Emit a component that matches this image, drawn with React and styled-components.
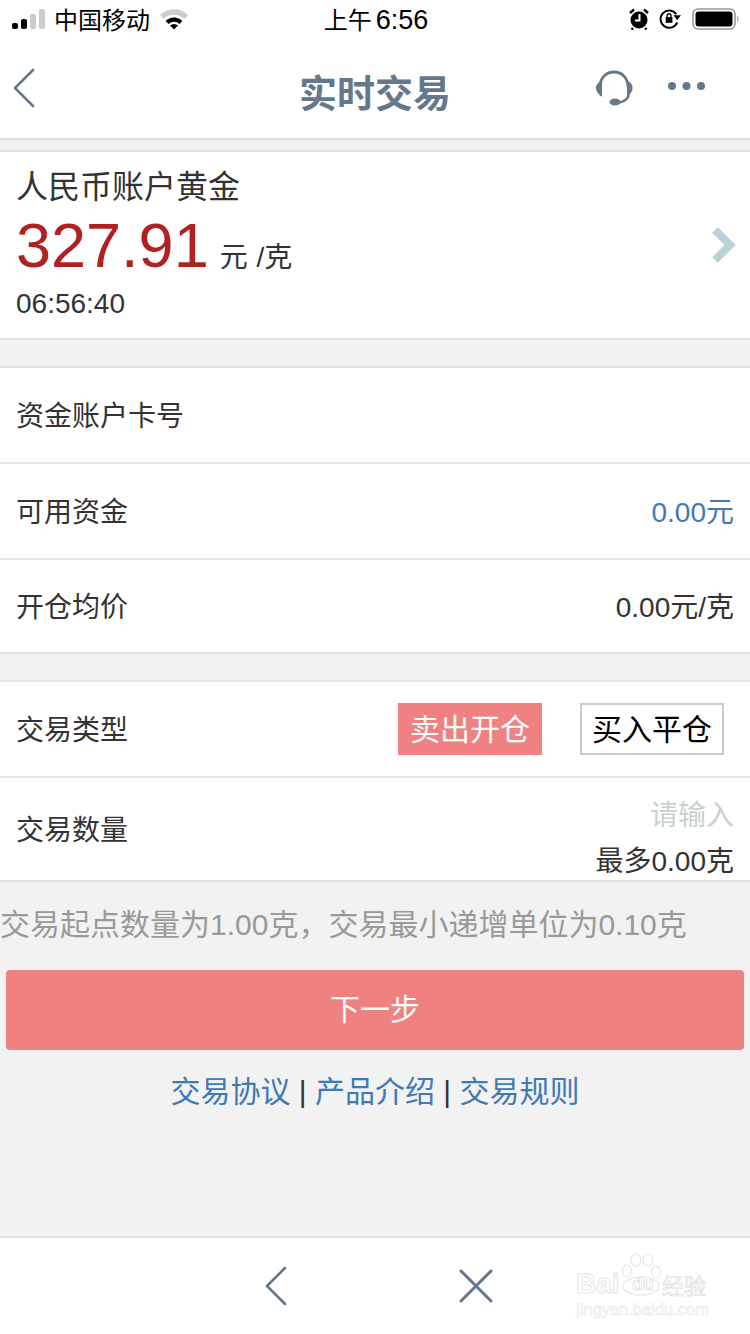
import React from 'react';
import styled, { createGlobalStyle } from 'styled-components';

const GlobalStyle = createGlobalStyle`
  html, body {
    margin: 0;
    padding: 0;
    background: #f2f2f2;
  }
  * {
    box-sizing: border-box;
  }
`

const Page = styled.div`
  width: 750px;
  height: 1334px;
  display: flex;
  flex-direction: column;
  background: #f2f2f2;
  font-family: "Liberation Sans", "Noto Sans CJK SC", sans-serif;
  color: #333;
  overflow: hidden;
`

const StatusBar = styled.div`
  height: 40px;
  padding: 0 10px 3px 12px;
  background: #fff;
  display: grid;
  grid-template-columns: 1fr auto 1fr;
  align-items: center;
  color: #000;
`

const StatusLeft = styled.div`
  display: flex;
  align-items: center;
  gap: 9px;
  font-size: 24px;
`

const StatusRight = styled.div`
  display: flex;
  align-items: center;
  justify-content: flex-end;
  gap: 10px;
`

const Clock = styled.div`
  font-size: 24px;
  display: flex;
  align-items: center;
  gap: 4px;
`

const ClockDigits = styled.span`
  font-size: 27px;
  margin-top: 3px;
`

const NavBar = styled.div`
  height: 100px;
  padding: 0 45px 2px 12px;
  background: #fff;
  border-bottom: 2px solid #d9e0e4;
  display: flex;
  align-items: center;
  justify-content: space-between;
  position: relative;
`

const NavTitle = styled.div`
  position: absolute;
  left: 0;
  right: 0;
  top: 23px;
  text-align: center;
  font-size: 38px;
  font-weight: bold;
  color: #64788a;
`

const NavActions = styled.div`
  display: flex;
  align-items: center;
  gap: 34px;
`

const DotsWrap = styled.div`
  display: flex;
  margin-top: -4px;
`

const Section = styled.div`
  margin-top: ${p => p.$gap}px;
  background: #fff;
  border-top: 2px solid #e2e2e2;
  border-bottom: 2px solid #e2e2e2;
`

const QuoteRow = styled.div`
  height: 186px;
  padding: 0 14px 0 16px;
  display: flex;
  align-items: center;
  justify-content: space-between;
`

const QuoteName = styled.div`
  font-size: 32px;
  line-height: 36px;
`

const PriceLine = styled.div`
  display: flex;
  align-items: baseline;
  gap: 11px;
  height: 70px;
  margin-top: 5px;
`

const Price = styled.span`
  font-size: 63px;
  line-height: 70px;
  color: #b02121;
`

const Unit = styled.span`
  font-size: 28px;
  word-spacing: 1px;
`

const QuoteTime = styled.div`
  font-size: 28px;
  line-height: 34px;
  margin-top: 7px;
`

const Row = styled.div`
  height: ${p => p.$height}px;
  padding: 0 16px 2px;
  display: flex;
  align-items: center;
  justify-content: space-between;
  font-size: 28px;
  & + & {
    border-top: 2px solid #e2e2e2;
  }
`

const RowValue = styled.span`
  color: ${p => p.$color || '#333'};
`

const TradeTypes = styled.div`
  display: flex;
  gap: 38px;
  margin: 2px 10px 0 0;
`

const TradeType = styled.div`
  width: 144px;
  height: 52px;
  padding-bottom: 4px;
  display: flex;
  align-items: center;
  justify-content: center;
  font-size: 30px;
  background: ${p => (p.$active ? '#ef8280' : '#fff')};
  color: ${p => (p.$active ? '#fff' : '#000')};
  border: ${p => (p.$active ? 'none' : '2px solid #ccc')};
`

const QuantityInfo = styled.div`
  display: flex;
  flex-direction: column;
  align-items: flex-end;
  gap: 12px;
  padding-top: 22px;
`

const Placeholder = styled.span`
  color: #c8d0d0;
  line-height: 34px;
`

const MaxAmount = styled.span`
  line-height: 34px;
`

const Hint = styled.div`
  height: 88px;
  padding-bottom: 8px;
  display: flex;
  align-items: center;
  font-size: 30px;
  color: #999;
  white-space: nowrap;
`

const NextButton = styled.button`
  display: block;
  width: 738px;
  height: 80px;
  margin: 0 6px;
  padding: 0 0 6px;
  border: none;
  border-radius: 4px;
  background: #ef8280;
  color: #fff;
  font-family: inherit;
  font-size: 30px;
`

const Links = styled.div`
  margin-top: 22px;
  text-align: center;
  font-size: 30px;
  line-height: 40px;
  color: #333;
`

const TextLink = styled.a`
  color: #4079b5;
`

const Spacer = styled.div`
  flex: 1;
`

const BottomBar = styled.div`
  height: 98px;
  background: #fff;
  border-top: 2px solid #e2e2e2;
  display: flex;
  align-items: center;
  position: relative;
  padding: 0 0 0 264px;
  gap: 171px;
`

const Watermark = styled.div`
  position: absolute;
  left: 576px;
  top: 15px;
  width: 136px;
  color: #fff;
  -webkit-text-stroke: 1px #e6e6e6;
`

const WatermarkMain = styled.div`
  display: flex;
  align-items: center;
  height: 26px;
  margin-top: 18px;
  white-space: nowrap;
`

const WatermarkBai = styled.span`
  font-size: 28px;
  font-weight: bold;
  width: 48px;
`

const WatermarkDu = styled.span`
  font-size: 18px;
  font-weight: bold;
  width: 38px;
  text-align: center;
`

const WatermarkCn = styled.span`
  font-size: 22px;
`

const WatermarkSub = styled.div`
  margin-top: 2px;
  font-size: 16.5px;
  line-height: 20px;
  white-space: nowrap;
  -webkit-text-stroke: 0.6px #e6e6e6;
`

const WatermarkPaw = styled.svg`
  position: absolute;
  left: 45px;
  top: 0;
`

const Signal = () => (
  <svg width="33" height="22" viewBox="0 0 33 22">
    <rect x="0" y="15" width="6" height="6" rx="2" fill="#000" />
    <rect x="9" y="11" width="6" height="10" rx="2" fill="#000" />
    <rect x="18" y="6" width="6" height="15" rx="2" fill="#ccc" />
    <rect x="27" y="1" width="6" height="20" rx="2" fill="#ccc" />
  </svg>
)

const Wifi = () => (
  <svg width="30" height="22" viewBox="0 0 30 22">
    <path d="M1 7 A20 20 0 0 1 29 7 L25.5 11 A15 15 0 0 0 4.5 11 Z" fill="#ccc" />
    <path d="M6.5 13 A12 12 0 0 1 23.5 13 L20.5 16 A8 8 0 0 0 9.5 16 Z" fill="#000" />
    <path d="M11 17.5 A6 6 0 0 1 19 17.5 L15 21.5 Z" fill="#000" />
  </svg>
)

const Alarm = () => (
  <svg width="20" height="22" viewBox="0 0 20 22">
    <circle cx="10" cy="12" r="8.5" fill="#000" />
    <path d="M1 5 L5 1.5 M15 1.5 L19 5 M4 20 L2.5 21.5 M16 20 L17.5 21.5" stroke="#000" strokeWidth="2.4" />
    <path d="M10.5 6 V12.5 H6" stroke="#fff" strokeWidth="2" fill="none" />
  </svg>
)

const RotationLock = () => (
  <svg width="23" height="22" viewBox="0 0 24 22">
    <path d="M19 14.5 A9 9 0 1 1 18 6" stroke="#000" strokeWidth="2" fill="none" />
    <path d="M15 7 H23 L19 12 Z" fill="#000" />
    <rect x="7" y="9" width="7" height="6" fill="#000" />
    <path d="M8.5 9 V7.5 A2 2 0 0 1 12.5 7.5 V9" stroke="#000" strokeWidth="1.4" fill="none" />
  </svg>
)

const Battery = () => (
  <svg width="48" height="24" viewBox="0 0 48 24">
    <rect x="1" y="2" width="42" height="20" rx="5" fill="none" stroke="#999" strokeWidth="1.6" />
    <rect x="3.5" y="4.5" width="37" height="15" rx="3" fill="#000" />
    <path d="M45 9 C47 9.5 47 14.5 45 15 Z" fill="#aaa" />
  </svg>
)

const Chevron = ({ width, height, color }) => (
  <svg width={width} height={height} viewBox="0 0 24 40">
    <path d="M21 2 L3 20 L21 38" fill="none" stroke={color} strokeWidth="2.6" strokeLinecap="round" strokeLinejoin="round" />
  </svg>
)

const Headset = () => (
  <svg width="40" height="38" viewBox="0 0 40 38">
    <path d="M6 18 C6 -2 34 -2 34 18" fill="none" stroke="#64788a" strokeWidth="2.8" />
    <path d="M8 12 C1 14 -1 22 8 28 Z M33 12 C40 14 41 22 33 28 Z" fill="#64788a" />
    <path d="M35 26 C33 31 29 33 25 33.5" fill="none" stroke="#64788a" strokeWidth="2.4" />
    <ellipse cx="21" cy="33" rx="5.5" ry="3.6" fill="#64788a" />
  </svg>
)

const Dots = () => (
  <svg width="37" height="10" viewBox="0 0 37 10">
    <circle cx="4" cy="5" r="4" fill="#64788a" />
    <circle cx="18.5" cy="5" r="4" fill="#64788a" />
    <circle cx="33" cy="5" r="4" fill="#64788a" />
  </svg>
)

const ArrowRight = () => (
  <svg width="26" height="38" viewBox="0 0 26 38">
    <path d="M5 4 L20 19 L5 34" fill="none" stroke="#bccfd8" strokeWidth="8" />
  </svg>
)

const Close = () => (
  <svg width="34" height="34" viewBox="0 0 34 34">
    <path d="M2 2 L32 32 M32 2 L2 32" stroke="#64788a" strokeWidth="3" strokeLinecap="round" />
  </svg>
)

const Paw = () => (
  <WatermarkPaw width="42" height="44" viewBox="0 0 42 44">
    <g fill="none" stroke="#e6e6e6" strokeWidth="1.2">
      <ellipse cx="6" cy="18" rx="4.5" ry="6" />
      <ellipse cx="15" cy="7" rx="5" ry="6" />
      <ellipse cx="27" cy="7" rx="5" ry="6" />
      <ellipse cx="35" cy="19" rx="4.5" ry="6" />
      <ellipse cx="20" cy="33" rx="18" ry="9" />
    </g>
  </WatermarkPaw>
)

class App extends React.Component {
  render() {
    return (
      <Page>
        <GlobalStyle />
        <StatusBar>
          <StatusLeft>
            <Signal />
            <span>中国移动</span>
            <Wifi />
          </StatusLeft>
          <Clock>
            上午
            <ClockDigits>6:56</ClockDigits>
          </Clock>
          <StatusRight>
            <Alarm />
            <RotationLock />
            <Battery />
          </StatusRight>
        </StatusBar>
        <NavBar>
          <Chevron width={24} height={40} color="#64788a" />
          <NavTitle>实时交易</NavTitle>
          <NavActions>
            <Headset />
            <DotsWrap>
              <Dots />
            </DotsWrap>
          </NavActions>
        </NavBar>

        <Section $gap={10}>
          <QuoteRow>
            <div>
              <QuoteName>人民币账户黄金</QuoteName>
              <PriceLine>
                <Price>327.91</Price>
                <Unit>元 /克</Unit>
              </PriceLine>
              <QuoteTime>06:56:40</QuoteTime>
            </div>
            <ArrowRight />
          </QuoteRow>
        </Section>

        <Section $gap={26}>
          <Row $height={94}>资金账户卡号</Row>
          <Row $height={96}>
            可用资金
            <RowValue $color="#4079b5">0.00元</RowValue>
          </Row>
          <Row $height={94}>
            开仓均价
            <RowValue>0.00元/克</RowValue>
          </Row>
        </Section>

        <Section $gap={26}>
          <Row $height={94}>
            交易类型
            <TradeTypes>
              <TradeType $active>卖出开仓</TradeType>
              <TradeType>买入平仓</TradeType>
            </TradeTypes>
          </Row>
          <Row $height={104}>
            交易数量
            <QuantityInfo>
              <Placeholder>请输入</Placeholder>
              <MaxAmount>最多0.00克</MaxAmount>
            </QuantityInfo>
          </Row>
        </Section>

        <Hint>交易起点数量为1.00克，交易最小递增单位为0.10克</Hint>
        <NextButton>下一步</NextButton>
        <Links>
          <TextLink>交易协议</TextLink> | <TextLink>产品介绍</TextLink> | <TextLink>交易规则</TextLink>
        </Links>
        <Spacer />

        <BottomBar>
          <Chevron width={24} height={40} color="#64788a" />
          <Close />
          <Watermark>
            <Paw />
            <WatermarkMain>
              <WatermarkBai>Bai</WatermarkBai>
              <WatermarkDu>du</WatermarkDu>
              <WatermarkCn>经验</WatermarkCn>
            </WatermarkMain>
            <WatermarkSub>jingyan.baidu.com</WatermarkSub>
          </Watermark>
        </BottomBar>
      </Page>
    );
  }
}

export default App;
